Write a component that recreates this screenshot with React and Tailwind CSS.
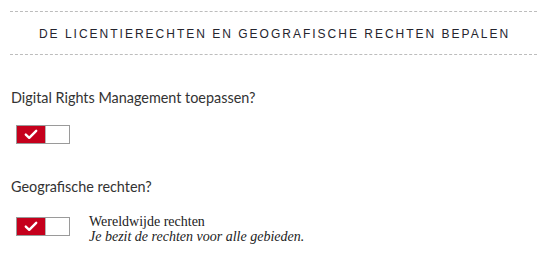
import React from 'react'

function Toggle() {
  return (
    <div className="flex w-[54px] h-[19px] border border-[#9a9a9a] bg-white">
      <div className="w-[28px] h-full bg-[#c5001c] flex items-center justify-center">
        <svg width="14" height="11" viewBox="0 0 14 11">
          <path d="M1.8 5.6 L5.2 8.8 L12.2 1.8" fill="none" stroke="white" strokeWidth="2.4" strokeLinecap="round" strokeLinejoin="round" />
        </svg>
      </div>
      <div className="flex-1 border-l border-[#b5b5b5]" />
    </div>
  )
}

export default function App() {
  return (
    <main className="w-[537px] h-[253px] bg-white pl-[10px] pt-[11px] text-[#333]" style={{ fontFamily: 'Lato, "Open Sans", sans-serif' }}>
      <div className="border-y border-dashed border-[#bdbdbd] h-[44px] flex items-center justify-center">
        <h2 className="text-[12px] tracking-[2px] uppercase whitespace-nowrap text-[#25252e] pl-[2px] pt-[1px]" style={{ fontFamily: '"Liberation Sans", Arial, sans-serif' }}>
          De licentierechten en geografische rechten bepalen
        </h2>
      </div>

      <div className="pt-[34px] pl-[1px]">
        <p className="text-[14.4px] leading-[18px]">Digital Rights Management toepassen?</p>
        <div className="pl-[5px] pt-[18px]">
          <Toggle />
        </div>
      </div>

      <div className="pt-[34px] pl-[1px]">
        <p className="text-[14.4px] leading-[18px]">Geografische rechten?</p>
        <div className="pl-[5px] pt-[21px] flex items-start gap-[19px]">
          <Toggle />
          <div className="text-[14px] leading-[15px] -mt-[3px] text-[#222]" style={{ fontFamily: '"Liberation Serif", Georgia, serif' }}>
            <div>Wereldwijde rechten</div>
            <div className="italic">Je bezit de rechten voor alle gebieden.</div>
          </div>
        </div>
      </div>
    </main>
  )
}
